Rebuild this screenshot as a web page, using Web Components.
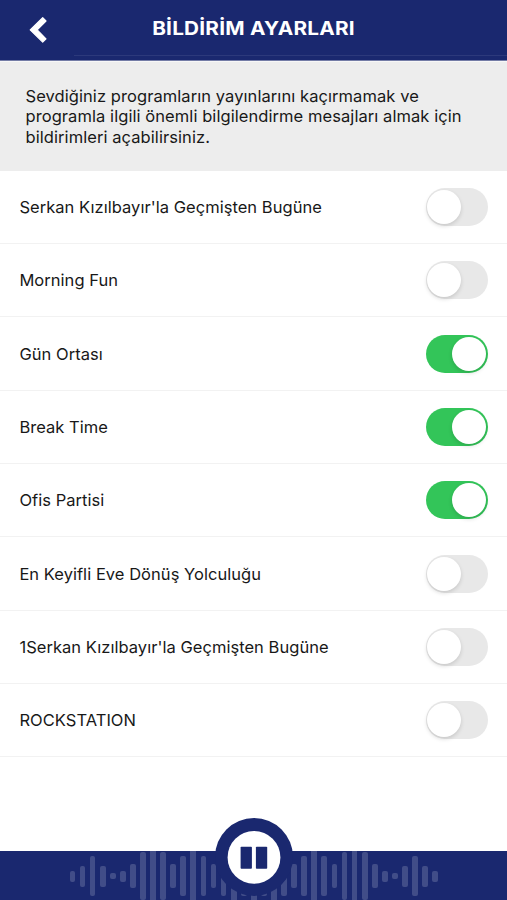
<!DOCTYPE html>
<html lang="tr">
<head>
<meta charset="utf-8">
<meta name="viewport" content="width=device-width, initial-scale=1">
<title>Bildirim Ayarları</title>
<style>
    body {
        --primary: #1a286f;
        --text: #181818;
        --success: #33c559;
        --off: #e8e8e8;
        --panel: #ededed;
        --divider: #f2f2f2;
        margin: 0;
        height: 100vh;
        overflow: hidden;
        background: #fff;
        color: var(--text);
        font-family: Inter, "Liberation Sans", sans-serif;
    }
</style>
</head>
<body>
<settings-page></settings-page>

<script>
function makeTemplate(html) {
    var template = document.createElement('template');
    template.innerHTML = html;
    return template;
}

class BaseElement extends HTMLElement {
    constructor(template) {
        super();
        this.shadowDOM = this.attachShadow({ mode: "open" });
        this.shadowDOM.appendChild(template.content.cloneNode(true));
    }
}

var app_header = makeTemplate(`
<style>
    :host {
        display: grid;
        grid-template-columns: 74px 1fr 74px;
        grid-template-rows: 55px 1px 4px;
        align-items: center;
        flex: none;
        background: var(--primary);
        border-bottom: 1px solid #747ca6;
        color: #fff;
    }
    svg {
        display: block;
        margin: 5px 0 0 27.5px;
    }
    h1 {
        margin: 0;
        padding-top: 3px;
        text-align: center;
        font-size: 19px;
        font-weight: 700;
        line-height: 24px;
        letter-spacing: 0.2px;
        white-space: nowrap;
        transform: scaleX(1.092);
    }
    .line {
        grid-column: 2 / 4;
        height: 1px;
        background: #2c397b;
    }
</style>
<svg width="20" height="28" viewBox="0 0 20 28">
    <path d="M14.7 1.7 L18 5 L9.2 13.9 L18 22.8 L14.7 26.1 L2.2 13.9 Z" fill="#fff" stroke="#fff" stroke-width="1.2" stroke-linejoin="round"/>
</svg>
<h1><slot></slot></h1>
<span></span>
<div class="line"></div>
`);

customElements.define('app-header',
    class extends BaseElement {
        constructor() { super(app_header); }
    }
);

var info_panel = makeTemplate(`
<style>
    :host {
        display: block;
        flex: none;
        box-sizing: border-box;
        height: 109.5px;
        padding: 23.6px 25px 0 25.5px;
        background: var(--panel);
        border-top: 1px solid #f7f7f7;
        font-size: 16.5px;
        line-height: 20.5px;
        letter-spacing: 0.07px;
        white-space: nowrap;
    }
</style>
<slot></slot>
`);

customElements.define('info-panel',
    class extends BaseElement {
        constructor() { super(info_panel); }
    }
);

var toggle_switch = makeTemplate(`
<style>
    :host {
        display: flex;
        align-items: center;
        box-sizing: border-box;
        width: 62.5px;
        height: 38px;
        padding: 0 1.8px;
        border-radius: 19px;
        background: var(--off);
    }
    :host([checked]) {
        justify-content: flex-end;
        background: var(--success);
    }
    .knob {
        width: 34px;
        height: 34px;
        border-radius: 50%;
        background: #fff;
        box-shadow: 0 2px 4px rgba(0, 0, 0, 0.14);
    }
</style>
<div class="knob"></div>
`);

customElements.define('toggle-switch',
    class extends BaseElement {
        constructor() {
            super(toggle_switch);
            this.addEventListener('click', () => this.toggleAttribute('checked'));
        }
    }
);

var program_item = makeTemplate(`
<style>
    :host {
        display: flex;
        align-items: center;
        justify-content: space-between;
        box-sizing: border-box;
        height: 73.35px;
        padding: 0.6px 19px 0 19.4px;
        border-bottom: 1.5px solid var(--divider);
        font-size: 16.5px;
        line-height: 20px;
        letter-spacing: 0.04px;
    }
</style>
<span><slot></slot></span>
<toggle-switch></toggle-switch>
`);

customElements.define('program-item',
    class extends BaseElement {
        constructor() { super(program_item); }
        attributeChangedCallback(attr, oldValue, newValue) {
            this.shadowDOM.querySelector('toggle-switch').toggleAttribute('checked', newValue !== null);
        }
        static get observedAttributes() {
            return ['enabled'];
        }
    }
);

var player_bar = makeTemplate(`
<style>
    :host {
        display: block;
        position: relative;
        flex: none;
        height: 49px;
        background: var(--primary);
    }
    .wave {
        display: flex;
        align-items: center;
        justify-content: space-between;
        width: 369px;
        height: 50px;
        margin: 0 auto;
        padding-left: 1px;
        overflow: hidden;
    }
    .wave span {
        width: 5.8px;
        border-radius: 2px;
        background: #414d88;
    }
    /* the button rises above the bar */
    button {
        position: absolute;
        left: 50%;
        top: -33.5px;
        width: 78px;
        height: 78px;
        margin-left: -38.8px;
        padding: 0;
        border: 0;
        background: none;
    }
    svg {
        display: block;
    }
</style>
<div class="wave"></div>
<button>
    <svg width="78" height="78" viewBox="0 0 78 78">
        <circle cx="39" cy="39" r="39" fill="#1a286f"/>
        <circle cx="39" cy="39.4" r="26.4" fill="#fff"/>
        <rect x="25.6" y="28.7" width="11.3" height="22" rx=".8" fill="#1a286f"/>
        <rect x="40.9" y="28.7" width="11.3" height="22" rx=".8" fill="#1a286f"/>
    </svg>
</button>
`);

customElements.define('player-bar',
    class extends BaseElement {
        constructor() {
            super(player_bar);
            var half = [11, 21, 40, 21, 6, 11, 24, 48, 54, 48, 24, 40, 54, 40, 24, 40, 54, 40];
            var bars = half.concat(54, half.slice().reverse());
            var wave = this.shadowDOM.querySelector('.wave');
            bars.forEach(height => {
                var bar = document.createElement('span');
                bar.style.height = height + 'px';
                wave.appendChild(bar);
            });
        }
    }
);

var settings_page = makeTemplate(`
<style>
    :host {
        display: flex;
        flex-direction: column;
        height: 100vh;
        overflow: hidden;
    }
    main {
        flex: 1;
        min-height: 0;
    }
</style>
<app-header>BİLDİRİM AYARLARI</app-header>
<info-panel>Sevdiğiniz programların yayınlarını kaçırmamak ve<br>programla ilgili önemli bilgilendirme mesajları almak için<br>bildirimleri açabilirsiniz.</info-panel>
<main>
    <program-item>Serkan Kızılbayır'la Geçmişten Bugüne</program-item>
    <program-item>Morning Fun</program-item>
    <program-item enabled>Gün Ortası</program-item>
    <program-item enabled>Break Time</program-item>
    <program-item enabled>Ofis Partisi</program-item>
    <program-item>En Keyifli Eve Dönüş Yolculuğu</program-item>
    <program-item>1Serkan Kızılbayır'la Geçmişten Bugüne</program-item>
    <program-item>ROCKSTATION</program-item>
</main>
<player-bar></player-bar>
`);

customElements.define('settings-page',
    class extends BaseElement {
        constructor() { super(settings_page); }
    }
);
</script>
</body>
</html>
